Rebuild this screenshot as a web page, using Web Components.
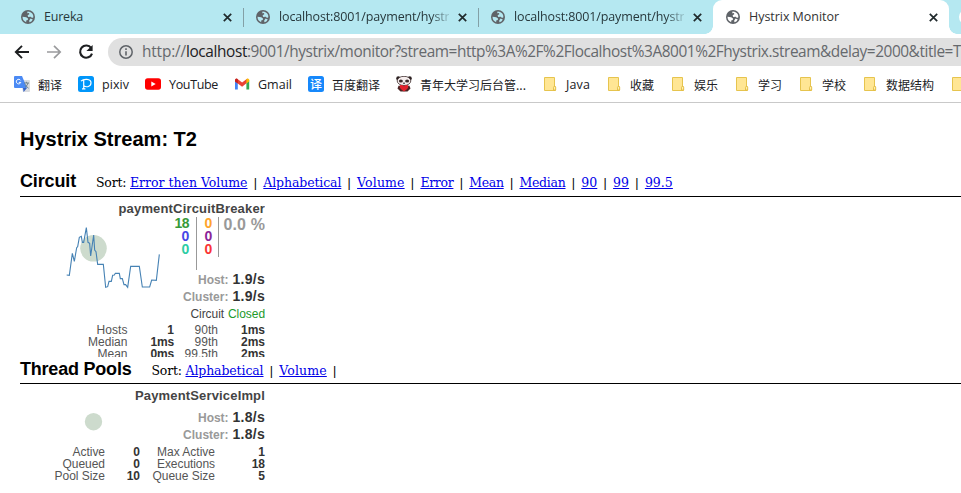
<!DOCTYPE html>
<html lang="zh-CN">
<head>
<meta charset="utf-8">
<title>Hystrix Monitor</title>
<style>
html,body{margin:0;width:961px;height:493px;overflow:hidden;background:#fff}
</style>
</head>
<body>
<browser-window></browser-window>
<script>
const define = (name, html, init) => {
  const t = document.createElement('template');
  t.innerHTML = html;
  customElements.define(name, class extends HTMLElement {
    connectedCallback() {
      if (this.shadowRoot) return;
      this.attachShadow({mode: 'open'}).append(t.content.cloneNode(true));
      if (init) init(this, this.shadowRoot);
    }
  });
};

/* Text run whose tracking is adjusted so that it spans the width in "w". */
define('fit-text', `<style>:host{display:inline-block;white-space:pre;flex:none}span{display:inline-block;text-decoration:inherit;text-underline-offset:inherit}</style><span><slot></slot></span>`, (el, root) => {
  const w = parseFloat(el.getAttribute('w'));
  const s = root.querySelector('span');
  const n = [...el.textContent].length;
  const natural = s.getBoundingClientRect().width;
  if (w && natural) {
    s.style.letterSpacing = ((w - natural) / n).toFixed(4) + 'px';
    el.style.width = w + 'px';
  }
});

define('globe-icon', `<style>:host{display:block;width:14px;height:14px;flex:none}svg{display:block}</style>
<svg width="14" height="14" viewBox="0 0 14 14"><circle cx="7" cy="7" r="7" fill="#5f6368"/><path d="M1.5 6.8 5.3 7.2 7 8.6 6.8 10 5.2 10.4 5.2 12.2Q1.6 10.9 1.5 6.8ZM6.5 1.5Q10.7 1.5 12.1 5L12.4 7.2 11 7.9 9.8 6.7 7.2 6.9 6.6 5.2 8.3 4.2 8 3 6.2 3.3ZM9.6 8.6 11.8 9.4Q10.6 11.8 8.4 12.3L8.2 10.6Z" fill="var(--hole,#b5e8f1)"/></svg>`);

define('browser-tab', `<style>
:host{display:flex;box-sizing:border-box;width:235px;height:34px;padding:0 11px 0 13px;align-items:center;font:12.5px "Open Sans","Noto Sans",sans-serif;color:#27383c;flex:none;position:relative}
.t{margin-left:9px;width:174px;overflow:hidden;white-space:nowrap;line-height:20px;height:20px}
:host([fade]) .t{-webkit-mask-image:linear-gradient(90deg,#000 152px,transparent 174px)}
svg{margin-left:9px;flex:none}
:host([sep])::after{content:"";position:absolute;right:-1px;top:8px;width:1px;height:19px;background:#83a0a6}
:host([active]){background:#fff;border-radius:9px 9px 0 0;--hole:#fff;width:236px;color:#333}
:host([active])::before,:host([active])::after{content:"";position:absolute;bottom:0;width:8px;height:8px}
:host([active])::before{left:-8px;background:radial-gradient(circle at 0 0,transparent 7.5px,#fff 8px)}
:host([active])::after{right:-8px;background:radial-gradient(circle at 100% 0,transparent 7.5px,#fff 8px)}
</style><globe-icon></globe-icon><div class="t"><slot></slot></div><svg width="9" height="9" viewBox="0 0 9 9"><path d="M.8.8 8.2 8.2M8.2.8.8 8.2" stroke="#202a2c" stroke-width="1.7"/></svg>`);

define('tab-strip', `<style>
:host{display:flex;height:34px;background:#b5e8f1;padding-left:8px;overflow:hidden}
.next{width:16px;height:16px;border-radius:50%;background:#fff;margin:9px 0 0 10px;flex:none}
</style>
<browser-tab sep><fit-text w="39">Eureka</fit-text></browser-tab>
<browser-tab sep fade><fit-text w="180">localhost:8001/payment/hystrix</fit-text></browser-tab>
<browser-tab fade><fit-text w="180">localhost:8001/payment/hystrix</fit-text></browser-tab>
<browser-tab active><fit-text w="90">Hystrix Monitor</fit-text></browser-tab>
<div class="next"></div>`);

define('tool-bar', `<style>
:host{display:flex;height:36px;align-items:center;padding-left:14px;background:#fff}
svg{display:block;flex:none}
.box{display:flex;align-items:center;margin-left:14px;height:28px;flex:1;background:#e0e0e0;border-radius:14px 0 0 14px;padding-left:11px;overflow:hidden;font:15.4px "Open Sans","Noto Sans",sans-serif;color:#66696d;line-height:26px}
.u{margin-left:9px;display:flex}.d{color:#202124}
</style>
<svg width="16" height="16" viewBox="0 0 16 16" fill="none" stroke="#1d1f21" stroke-width="1.9"><path d="M15 8H2.3M8 1.8 1.8 8 8 14.2"/></svg>
<svg style="margin-left:16px" width="16" height="16" viewBox="0 0 16 16" fill="none" stroke="#9a9b9d" stroke-width="1.7"><path d="M1 8h12.7M8 1.8 14.2 8 8 14.2"/></svg>
<svg style="margin-left:16px" width="16" height="16" viewBox="0 0 16 16"><path d="M13.2 4.1A6.1 6.1 0 1 0 14 9.6" fill="none" stroke="#1d1f21" stroke-width="2.1"/><path d="M14.6.9v6.2H8.4Z" fill="#1d1f21"/></svg>
<div class="box">
<svg width="14" height="14" viewBox="0 0 14 14"><circle cx="7" cy="7" r="6.2" fill="none" stroke="#5f6368" stroke-width="1.5"/><path d="M7 6.2v4.2M7 3.3v1.6" stroke="#5f6368" stroke-width="1.6"/></svg>
<div class="u"><fit-text w="44">http://</fit-text><fit-text class="d" w="61">localhost</fit-text><fit-text w="714">:9001/hystrix/monitor?stream=http%3A%2F%2Flocalhost%3A8001%2Fhystrix.stream&amp;delay=2000&amp;title=T</fit-text></div>
</div>`);

define('book-mark', `<style>:host{display:flex;align-items:center;gap:8px;flex:none}
svg,::slotted(svg){display:block;flex:none;width:16px;height:16px}.f{display:none}:host([folder]) .f{display:block}
::slotted(fit-text){padding-top:1px}</style>
<svg class="f" viewBox="0 0 16 16"><path d="M2.5 1.5h10v9.3h1v3.7h-11Z" fill="#ffe694" stroke="#e6c44e"/><path d="M11.5 14v-2.6q0-1 1.1-1t1.1 1V14Z" fill="#fff0ad" stroke="#e0b83a" stroke-width=".8"/></svg>
<slot name="icon"></slot><slot></slot>`);

define('bookmark-bar', `<style>
:host{display:flex;box-sizing:border-box;height:33px;padding:0 0 4px 14px;gap:16px;align-items:center;border-bottom:1px solid #c9c9c9;background:#fff;font:12.5px/18px "Open Sans","Noto Sans CJK SC",sans-serif;color:#202124;overflow:hidden}
.c{font:12px/18px "Noto Sans CJK SC",sans-serif}
.tr{box-sizing:border-box;display:flex;justify-content:center;width:16px;height:16px;border-radius:2.5px;background:#1688fb;color:#fff;font:500 12px/15px "Noto Sans CJK SC",sans-serif}
</style>
<book-mark><svg slot="icon" viewBox="0 0 16 16"><path d="M6 4h9q1 0 1 1v10q0 1-1 1H9Z" fill="#dadce0"/><path d="M1 0h7l5 12H1q-1 0-1-1V1Q0 0 1 0Z" fill="#4b8af4"/><path d="m9 12 4 0-3.4 4Z" fill="#3562c4"/><path d="M6.6 4.4A2.3 2.3 0 1 0 6.8 6.4H4.8" fill="none" stroke="#fff" stroke-width="1"/><path d="M10 7h5M12.4 5.8V7M14 7q-.7 3-3 4.4M11.4 8.5q1 2.4 3.2 3.7" fill="none" stroke="#667b85" stroke-width=".9"/></svg><fit-text class="c" w="24">翻译</fit-text></book-mark>
<book-mark><svg slot="icon" viewBox="0 0 16 16"><rect width="16" height="16" rx="2.5" fill="#0096fa"/><path d="M3 5.2C5.5 2.6 13 2.3 13 6.8c0 4-4.6 4.8-7.1 3M5.7 3.8v9M4 12.9h3.4" fill="none" stroke="#fff" stroke-width="1.2"/></svg><fit-text w="27">pixiv</fit-text></book-mark>
<book-mark><svg slot="icon" viewBox="0 0 16 16"><rect y="2.3" width="16" height="11.4" rx="2.7" fill="#f00"/><path d="m6.3 5.6 4.4 2.4-4.4 2.4Z" fill="#fff"/></svg><fit-text w="49">YouTube</fit-text></book-mark>
<book-mark><svg slot="icon" viewBox="0 0 16 16"><path d="M1 4v9.6h2.8V6Z" fill="#4285f4"/><path d="M15.2 4v9.6h-2.8V6Z" fill="#34a853"/><path d="M1 3.7 2.8 2.4 8.1 6.5l5.3-4.1v4.2L8.1 10.7 2.8 6.7 1 5.3Z" fill="#ea4335"/><path d="M12.4 3.2q1.3-1.4 2.8.3v2l-2.8 2Z" fill="#fbbc04"/><path d="M3.8 3.2Q2.3 1.8 1 3.5v2l2.8 2Z" fill="#c5221f"/></svg><fit-text w="34">Gmail</fit-text></book-mark>
<book-mark><span slot="icon" class="tr">译</span><fit-text class="c" w="48">百度翻译</fit-text></book-mark>
<book-mark><svg slot="icon" viewBox="0 0 16 16"><circle cx="2.3" cy="2.4" r="2.1" fill="#2b2021"/><circle cx="13.7" cy="2.4" r="2.1" fill="#2b2021"/><ellipse cx="8" cy="4.9" rx="6.8" ry="4.6" fill="#f5eded" stroke="#3a2929" stroke-width=".8"/><ellipse cx="4.9" cy="4.9" rx="2" ry="1.5" fill="#3b2b2b"/><ellipse cx="11.1" cy="4.9" rx="2" ry="1.5" fill="#3b2b2b"/><path d="M7 7.2h2" stroke="#222"/><path d="M2.5 9.8h11l1 2.6-3 3.1H4.5l-3-3.1Z" fill="#4a2525"/><path d="M4 9.3q2-1 4 1 2-2 4-1 1.5 3-4 6.1Q2.5 12.3 4 9.3Z" fill="#e2232d"/></svg><fit-text class="c" w="106">青年大学习后台管...</fit-text></book-mark>
<book-mark folder><fit-text w="24">Java</fit-text></book-mark>
<book-mark folder><fit-text class="c" w="24">收藏</fit-text></book-mark>
<book-mark folder><fit-text class="c" w="24">娱乐</fit-text></book-mark>
<book-mark folder><fit-text class="c" w="24">学习</fit-text></book-mark>
<book-mark folder><fit-text class="c" w="24">学校</fit-text></book-mark>
<book-mark folder><fit-text class="c" w="48">数据结构</fit-text></book-mark>
<book-mark folder></book-mark>`);

define('section-bar', `<style>
:host{display:flex;box-sizing:border-box;height:27px;border-bottom:1px solid #000;align-items:baseline;font:bold 18px/24px "Liberation Sans",Arial,sans-serif;color:#000}
:host([first]){line-height:22px}
.s{display:flex;align-items:baseline;font:12.5px/16px "DejaVu Serif",serif;margin-left:20px}
</style><slot></slot><div class="s"><slot name="sort"></slot></div>`);

define('sort-links', `<style>:host{display:flex;white-space:pre}
a{color:#0000e8;text-underline-offset:1px}.b{width:15.8px;text-align:center;font-family:"Liberation Sans",sans-serif}</style><fit-text w="34">Sort: </fit-text>`, (el, root) => {
  el.getAttribute('items').split(',').forEach((item, i, all) => {
    const [label, w] = item.split(':');
    const a = document.createElement('a');
    a.href = '#';
    const f = document.createElement('fit-text');
    f.setAttribute('w', w);
    f.textContent = label;
    f.style.textDecoration = 'underline';
    a.append(f);
    root.append(a);
    if (i < all.length - 1 || el.hasAttribute('trail')) {
      const b = document.createElement('span');
      b.className = 'b';
      b.textContent = '|';
      root.append(b);
    }
  });
});

define('rate-lines', `<style>:host{display:block;font:bold 14px/17px "Liberation Sans",Arial,sans-serif;color:#333}
div{display:flex;justify-content:flex-end;align-items:baseline;gap:4px;height:17px}.g{color:#999;font-size:12px}</style>
<div><fit-text class="g" w="30.5">Host:</fit-text><fit-text class="v"></fit-text></div>
<div><fit-text class="g" w="45.5">Cluster:</fit-text><fit-text class="v"></fit-text></div>`, (el, root) => {
  root.querySelectorAll('.v').forEach(v => {
    const n = document.createElement('fit-text');
    n.setAttribute('w', '32.5');
    n.textContent = el.getAttribute('value');
    v.replaceWith(n);
  });
});

define('stat-grid', `<style>:host{display:grid;grid-template-columns:var(--cols);grid-auto-rows:12px;font:12px/12px "Liberation Sans",Arial,sans-serif;color:#555;text-align:right;white-space:nowrap}
b{color:#333}</style>`, (el, root) => {
  el.getAttribute('rows').split(',').forEach((t, i) => {
    const n = document.createElement(i % 2 ? 'b' : 'span');
    const [label, w] = t.split(':');
    if (w) {
      const f = document.createElement('fit-text');
      f.setAttribute('w', w);
      f.textContent = label;
      n.append(f);
    } else n.textContent = label;
    root.append(n);
  });
});

define('circuit-card', `<style>
:host{display:block;width:245px;height:160px;overflow:hidden;font-family:"Liberation Sans",Arial,sans-serif}
.title{display:flex;justify-content:flex-end;height:20px;font:bold 13px/24px "Liberation Sans";color:#444}
.main{display:grid;grid-template-columns:155px 22px 22px 46px;height:54px}
.chart{display:block;overflow:visible}
.n{font:bold 14px/13px "Liberation Sans";text-align:right;display:flex;flex-direction:column}
.n fit-text{height:13px}
.one{border-right:1px solid #999;height:53px;padding-right:7px;width:14px;align-items:flex-end}
.two{border-right:1px solid #999;height:40px;padding-right:6px;width:15px;align-items:flex-end}
.p{font:bold 16px/15px "Liberation Sans";color:#999;text-align:right}
.st{display:flex;justify-content:flex-end;height:19px;font-size:12px;line-height:19px;color:#444;gap:4px}
.st .ok{color:#229a2b}
stat-grid{--cols:107.5px 46.5px 44px 47px}
</style>
<div class="title"><fit-text w="146.5">paymentCircuitBreaker</fit-text></div>
<div class="main">
<svg class="chart" width="155" height="55" viewBox="20 217 155 55"><circle cx="93.5" cy="248.3" r="13.3" fill="#cddbcd"/><g transform="translate(60 220) scale(.33333)"><path d="M20 165 28 166 37 100 43 124 50 83 53 80 58 52 64 49 67 67 71 67 79 23 84 67 89 70 92 108 101 45 104 90 108 95 113 133 130 133 137 202 143 200 147 184 154 184 158 166 163 165 166 160 178 160 181 176 187 176 192 194 197 194 203 202 212 139 238 139 247 201 269 201 275 180 289 181 298 103" fill="none" stroke="#4682b4" stroke-width="3.3"/></g></svg>
<div class="n one"><fit-text w="14.5" style="color:#389a38">18</fit-text><fit-text w="7.5" style="color:#4747e6">0</fit-text><fit-text w="7.5" style="color:#2dcda4">0</fit-text></div>
<div class="n two"><fit-text w="7.5" style="color:#ffa42b">0</fit-text><fit-text w="7.5" style="color:#8b2498">0</fit-text><fit-text w="7.5" style="color:#fa3434">0</fit-text></div>
<div class="p"><fit-text w="41.5">0.0 %</fit-text></div>
</div>
<rate-lines value="1.9/s"></rate-lines>
<div class="st"><fit-text w="33.5">Circuit</fit-text><fit-text class="ok" w="37">Closed</fit-text></div>
<stat-grid rows="Hosts:31,1,90th:23.5,1ms:24,Median:39.5,1ms:23.5,99th:23.5,2ms:24,Mean:30,0ms:23.5,99.5th:33.5,2ms:24"></stat-grid>`);

define('pool-card', `<style>
:host{display:block;width:245px;height:100px;font-family:"Liberation Sans",Arial,sans-serif}
.title{display:flex;justify-content:flex-end;height:25px;font:bold 13px/23px "Liberation Sans";color:#444}
.main{display:grid;grid-template-columns:100px 145px;height:37px}
svg{display:block;overflow:visible}
stat-grid{--cols:85px 35px 75px 50px}
</style>
<div class="title"><fit-text w="130">PaymentServiceImpl</fit-text></div>
<div class="main"><svg width="100" height="37" viewBox="20 409 100 37"><circle cx="93.5" cy="421.7" r="8.7" fill="#cddbcd"/></svg><rate-lines value="1.8/s"></rate-lines></div>
<stat-grid rows="Active:32.5,0,Max Active:58,1,Queued:42.5,0,Executions:58,18,Pool Size:50.5,10,Queue Size:62.5,5"></stat-grid>`);

define('hystrix-page', `<style>
:host{display:block;padding:23px 0 0 20px;background:#fff}
.h{font:bold 20px/26px "Liberation Sans",Arial,sans-serif;color:#000;height:44px}
</style>
<div class="h"><fit-text w="177">Hystrix Stream: T2</fit-text></div>
<section-bar first><fit-text w="56">Circuit</fit-text><sort-links slot="sort" items="Error then Volume:117.5,Alphabetical:78,Volume:47.5,Error:33,Mean:34.5,Median:46,90:16,99:16,99.5:28"></sort-links></section-bar>
<circuit-card></circuit-card>
<section-bar><fit-text w="111.5">Thread Pools</fit-text><sort-links slot="sort" trail items="Alphabetical:78,Volume:47.5"></sort-links></section-bar>
<pool-card></pool-card>`);

define('browser-window', `<style>:host{display:block;width:961px;height:493px;overflow:hidden}</style>
<tab-strip></tab-strip><tool-bar></tool-bar><bookmark-bar></bookmark-bar><hystrix-page></hystrix-page>`);
</script>
</body>
</html>
